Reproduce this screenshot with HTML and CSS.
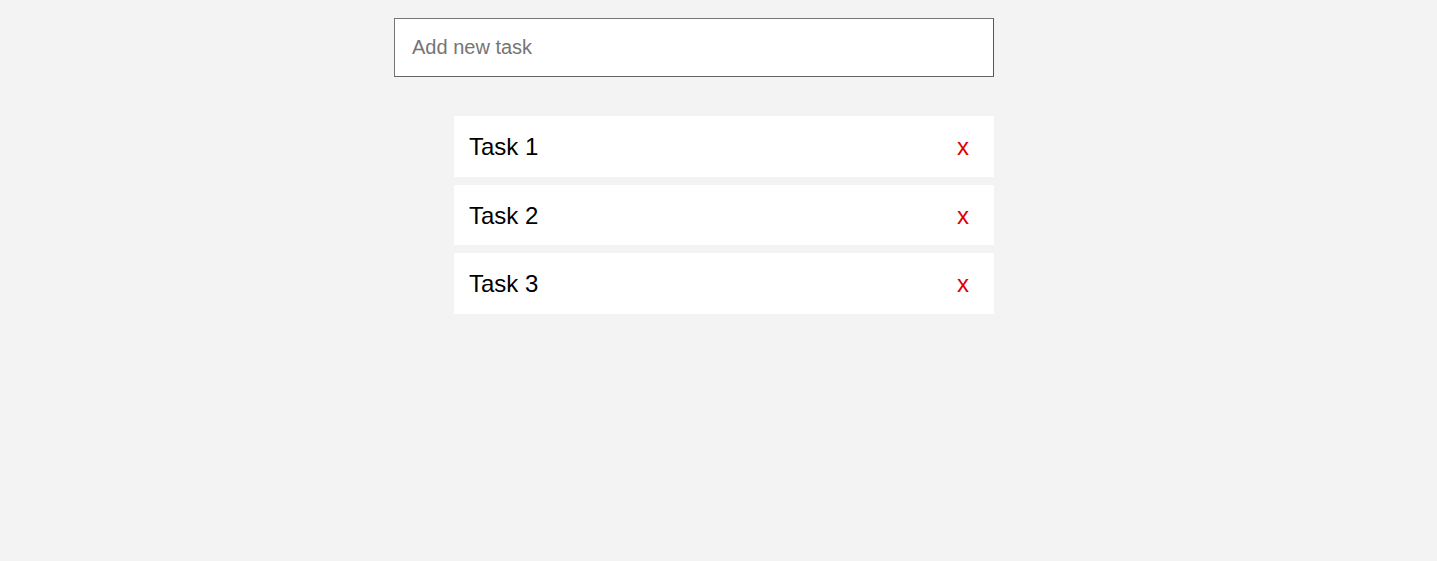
FILE: index.html
```html
<!DOCTYPE html>
<html lang="en">
<head>
<meta charset="utf-8">
<title>Todo</title>
<link rel="stylesheet" href="styles.css">
</head>
<body>
<div class="app">
  <form class="add-form">
    <input class="task-input" type="text" placeholder="Add new task">
  </form>
  <ul class="task-list">
    <li class="task-item"><span class="task-text">Task 1</span><button class="remove-btn" type="button">x</button></li>
    <li class="task-item"><span class="task-text">Task 2</span><button class="remove-btn" type="button">x</button></li>
    <li class="task-item"><span class="task-text">Task 3</span><button class="remove-btn" type="button">x</button></li>
  </ul>
</div>
</body>
</html>
```
FILE: styles.css
```css
html, body {
  margin: 0;
  padding: 0;
  background: #f3f3f3;
}
body {
  font-family: "Liberation Sans", Arial, sans-serif;
}
.app {
  width: 649px;
  margin: 0 auto;
  padding-top: 18px;
}
.add-form {
  margin: 0;
}
.task-input {
  box-sizing: border-box;
  display: block;
  width: 600px;
  height: 59px;
  margin: 0;
  padding: 0 17px;
  border: 1px solid #767676;
  border-right-color: #555;
  border-bottom-color: #666;
  background: #fff;
  font-family: "Liberation Sans", Arial, sans-serif;
  font-size: 20px;
  color: #222;
  outline: none;
}
.task-input::placeholder {
  color: #757575;
}
.task-list {
  list-style: none;
  margin: 39px 0 0;
  padding: 0 0 0 60px;
  width: 540px;
  display: flex;
  flex-direction: column;
  gap: 8px;
}
.task-item {
  box-sizing: border-box;
  height: 60.5px;
  background: #fff;
  display: flex;
  align-items: center;
  justify-content: space-between;
  padding: 2px 15px 0 15px;
  font-size: 24px;
  color: #000;
}
.remove-btn {
  background: none;
  border: none;
  color: #e00000;
  font-family: "Liberation Sans", Arial, sans-serif;
  font-size: 24px;
  padding: 0 10px;
  cursor: pointer;
}
```
